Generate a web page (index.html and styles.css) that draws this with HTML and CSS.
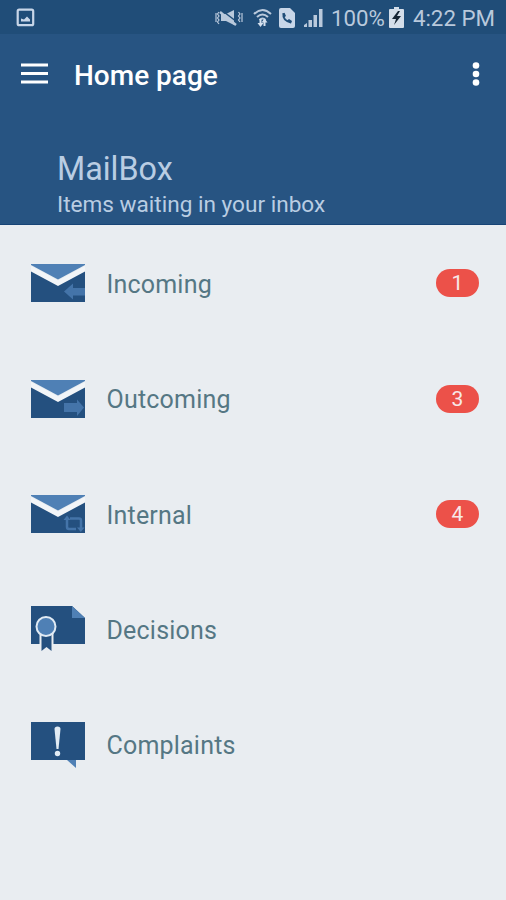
FILE: index.html
```
<!DOCTYPE html>
<html lang="en">
<head>
  <meta charset="UTF-8" />
  <meta name="viewport" content="width=device-width, initial-scale=1.0" />
  <title>Home page</title>
  <link rel="stylesheet" href="styles.css">
</head>
<body>
  <div class="status-bar">
    <svg class="st-picture" width="19" height="19" viewBox="0 0 19 19">
      <rect x="1.7" y="1.7" width="15.500" height="15.500" rx="1.5" fill="none" stroke="#c8d6e8" stroke-width="2.2"/>
      <path d="M5 13.500V10.500l3 1 3-3 3 3v2z" fill="#c8d6e8"/>
    </svg>
    <div class="status-right">
      <svg class="st-mute" width="28" height="18" viewBox="0 0 28 18">
        <path d="M6 5h5l8-4v15l-8-4H6z" fill="#b9c9dc"/>
        <path d="M7 1.500l17 13" stroke="#204d78" stroke-width="1.500"/>
        <path d="M5 3l16 13" stroke="#b9c9dc" stroke-width="2.400"/>
        <path d="M4 3L2.500 5 4 7 2.500 9 4 11 2.500 13 4 15M1 4v9M23.500 3L25 5l-1.500 2L25 9l-1.500 2 1.500 2M27 4v9" fill="none" stroke="#b9c9dc" stroke-width="1.200"/>
      </svg>
      <svg class="st-wifi" width="19" height="20" viewBox="0 0 19 20">
        <path d="M1 6q8.500-8 17 0M4 9q5.500-5 11 0M6.500 12q3-3 6 0" fill="none" stroke="#b9c9dc" stroke-width="2"/>
        <path d="M7.500 11v5M11.500 12v6" stroke="#d4e0ee" stroke-width="2"/>
        <path d="M4.500 15h6l-3 4zM8.500 14.500l3-4 3 4z" fill="#d4e0ee"/>
      </svg>
      <svg class="st-call" width="16" height="20" viewBox="0 0 16 20">
        <path d="M2 0h9l5 5v13q0 2-2 2H2q-2 0-2-2V2q0-2 2-2z" fill="#c8d6e8"/>
        <path d="M4.500 5.500q-1 7 7.500 9" fill="none" stroke="#204d78" stroke-width="2"/>
        <path d="M3.500 5.500l2-.8L7 8 5 9.500zM8 12.500l2-1.500 3 2-1 2.500z" fill="#204d78"/>
      </svg>
      <svg class="st-signal" width="19" height="19" viewBox="0 0 19 19">
        <path d="M0 19v-2l3-2v4zM4.500 19v-7H8v7zM9.500 19V7H13v12zM15 19V1h3.500v18z" fill="#b9c9dc"/>
      </svg>
      <span class="percent">100%</span>
      <svg class="st-battery" width="15" height="21" viewBox="0 0 15 21">
        <path d="M5 0h5v2h4q1 0 1 1v17q0 1-1 1H1q-1 0-1-1V3q0-1 1-1h4z" fill="#d4deea"/>
        <path d="M9 4l-6 8h4l-2 6 7-9H8l3-5z" fill="#152434"/>
      </svg>
      <span class="time">4:22 PM</span>
    </div>
  </div>

  <header class="app-bar">
    <svg class="menu" width="27" height="21" viewBox="0 0 27 21">
      <path d="M0 2h27M0 10.500h27M0 19h27" stroke="#fff" stroke-width="3.200"/>
    </svg>
    <h1>Home page</h1>
    <svg class="more" width="8" height="24" viewBox="0 0 8 24">
      <circle cx="4" cy="3.500" r="3.300" fill="#fff"/>
      <circle cx="4" cy="12" r="3.300" fill="#fff"/>
      <circle cx="4" cy="20.500" r="3.300" fill="#fff"/>
    </svg>
  </header>

  <section class="mailbox">
    <h2>MailBox</h2>
    <p>Items waiting in your inbox</p>
  </section>

  <main class="list">
    <div class="row">
      <svg class="icon" width="54" height="38" viewBox="0 0 54 38">
        <path d="M0 0h54v1L27 15.500 0 1z" fill="#4f80b5"/>
        <path d="M0 2L27 16.500 54 2v6L27 22 0 8z" fill="#f2f5f8"/>
        <path d="M0 7.500V38h54V7.500L27 22z" fill="#24507f"/>
        <path d="M33 27.500l9-8v4.500h12v7.500H42v4z" fill="#4474a9"/>
      </svg>
      <span class="label">Incoming</span>
      <span class="badge">1</span>
    </div>
    <div class="row">
      <svg class="icon" width="54" height="38" viewBox="0 0 54 38">
        <path d="M0 0h54v1L27 15.500 0 1z" fill="#4f80b5"/>
        <path d="M0 2L27 16.500 54 2v6L27 22 0 8z" fill="#f2f5f8"/>
        <path d="M0 7.500V38h54V7.500L27 22z" fill="#24507f"/>
        <path d="M53 27.500l-7-8v3.500H33v9h13v4z" fill="#4474a9"/>
      </svg>
      <span class="label">Outcoming</span>
      <span class="badge">3</span>
    </div>
    <div class="row">
      <svg class="icon" width="54" height="38" viewBox="0 0 54 38">
        <path d="M0 0h54v1L27 15.500 0 1z" fill="#4f80b5"/>
        <path d="M0 2L27 16.500 54 2v6L27 22 0 8z" fill="#f2f5f8"/>
        <path d="M0 7.500V38h54V7.500L27 22z" fill="#24507f"/>
        <path d="M36 23v9q0 2 2 2h7M39 23.500h9q2 0 2 2V34" fill="none" stroke="#4474a9" stroke-width="2.500"/>
        <path d="M32.500 25l3.500-4.500 3.500 4.500zM46 32.500h7.500L49.800 37z" fill="#4474a9"/>
      </svg>
      <span class="label">Internal</span>
      <span class="badge">4</span>
    </div>
    <div class="row">
      <svg class="icon" width="54" height="46" viewBox="0 0 54 46">
        <path d="M0 0h41l13 12v26H0z" fill="#24507f"/>
        <path d="M41 0l13 12H41z" fill="#4f80b5"/>
        <path d="M8.500 27h14v18l-7-3-7 3z" fill="#e9edf1"/>
        <path d="M10.500 28h10v17l-5-4-5 4z" fill="#24507f"/>
        <circle cx="15" cy="20.500" r="9.500" fill="#4f80b5" stroke="#e1ebf4" stroke-width="2"/>
      </svg>
      <span class="label">Decisions</span>
    </div>
    <div class="row">
      <svg class="icon" width="54" height="46" viewBox="0 0 54 46">
        <path d="M0 0h54v38H0z" fill="#24507f"/>
        <path d="M36 38h9v8z" fill="#4f80b5"/>
        <path d="M23.500 7q0-2.500 3-2.500t3 2.500l-2 20h-2z" fill="#e1ebf4"/>
        <circle cx="26.500" cy="31.500" r="2.700" fill="#e1ebf4"/>
      </svg>
      <span class="label">Complaints</span>
    </div>
  </main>
</body>
</html>
```
FILE: styles.css
```
* {
  box-sizing: border-box;
}

body {
  margin: 0;
  height: 900px;
  background-color: #e9edf1;
  font-family: Roboto, sans-serif;
  overflow: hidden;
}

svg {
  display: block;
  flex-shrink: 0;
}

.status-bar {
  height: 34px;
  padding: 1px 11px 0 16px;
  display: flex;
  align-items: center;
  justify-content: space-between;
  background-color: #204d78;
  color: #b9c9dc;
  font-size: 22.3px;
  white-space: nowrap;
}

.status-right {
  display: flex;
  align-items: center;
  height: 33px;
}

.percent,
.time {
  margin-top: 1px;
}

.st-wifi {
  margin-left: 10px;
}

.st-call {
  margin-left: 7px;
}

.st-signal {
  margin-left: 9px;
}

.percent {
  margin-left: 8px;
}

.st-battery {
  margin: 0 9px 1px 4px;
}

.app-bar {
  height: 79px;
  padding: 0 26px 0 21px;
  display: flex;
  align-items: center;
  background-color: #275482;
  color: #fff;
}

.app-bar h1 {
  margin: 3px 0 0 26px;
  font-size: 28px;
  font-weight: 500;
}

.more {
  margin-left: auto;
}

.mailbox {
  height: 112px;
  padding: 37px 0 0 57px;
  background-color: #275482;
  border-bottom: 1px solid #174476;
  color: #b9cde3;
}

.mailbox h2 {
  margin: 0;
  font-size: 32.3px;
  line-height: 38px;
  font-weight: 400;
}

.mailbox p {
  margin: 3px 0 0;
  font-size: 22.6px;
  line-height: 27px;
}

.list {
  padding-top: 0.6px;
}

.row {
  height: 115.4px;
  padding: 0 27px 0 31px;
  display: flex;
  align-items: center;
}

.label {
  margin: 2px 0 0 21.5px;
  color: #557784;
  font-size: 25px;
  letter-spacing: 0.2px;
}

.badge {
  width: 43px;
  height: 28px;
  margin-left: auto;
  border-radius: 14px;
  background-color: #ec5149;
  color: #f7e9e9;
  font-size: 21px;
  line-height: 29px;
  text-align: center;
}
```
